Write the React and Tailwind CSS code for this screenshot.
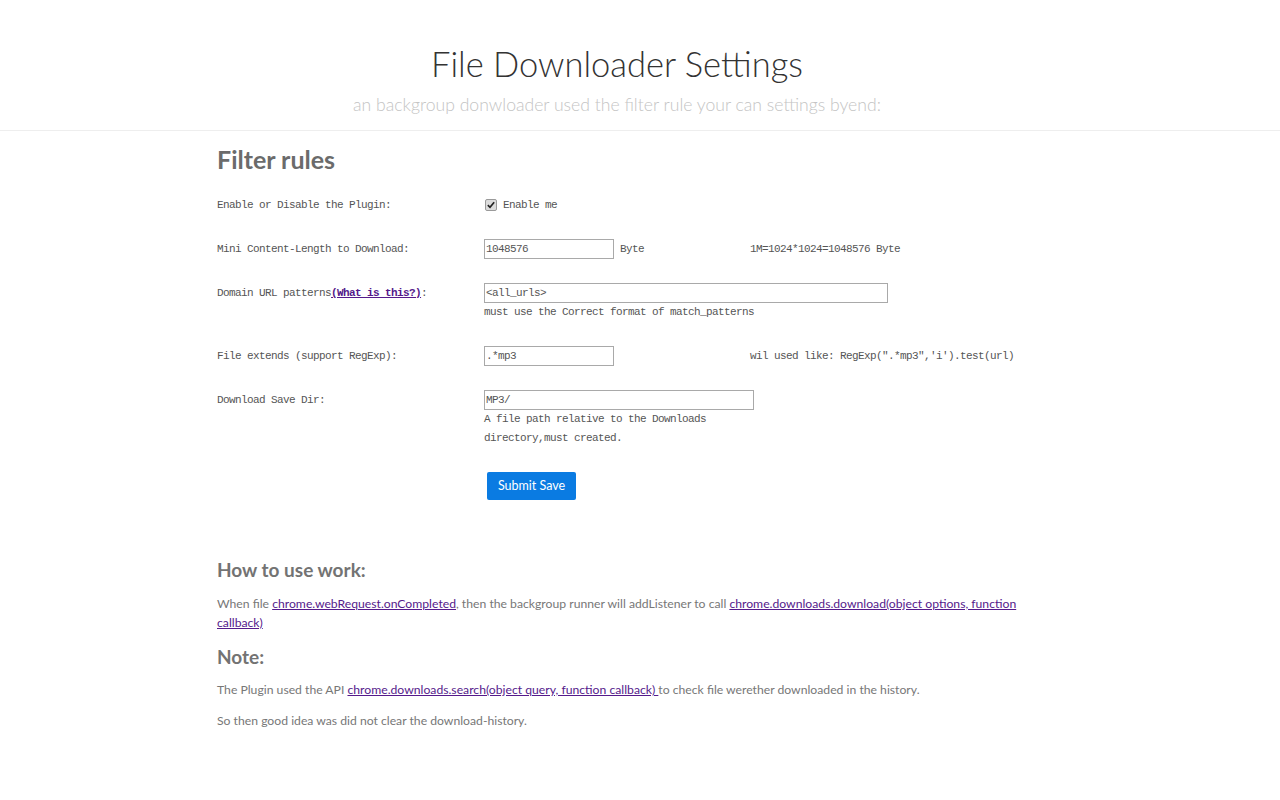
import React from "react";

const mono = "font-['SimSun','Liberation_Mono',monospace] text-[11px] tracking-[-0.6px] text-[#555]";
const sans = "font-['Segoe_UI','Lato',sans-serif]";

function Row({ label, children }) {
  return (
    <div className="flex">
      <div className={`w-[267px] shrink-0 leading-[20px] ${mono}`}>{label}</div>
      <div className="flex-1">{children}</div>
    </div>
  );
}

function TextInput({ value, width }) {
  return (
    <input
      type="text"
      defaultValue={value}
      className={`block h-[20px] border border-[#a9a9a9] px-[1px] leading-[18px] outline-none ${mono} text-[#333]`}
      style={{ width }}
    />
  );
}

export default function App() {
  return (
    <div className={`min-h-screen bg-white ${sans}`}>
      {/* Page header */}
      <header className="h-[131px] border-b border-[#eeeeee] pr-[46px] pt-[42px] text-center">
        <h1 className="text-[34.5px] font-light leading-[44px] text-[#333]">File Downloader Settings</h1>
        <p className="mt-[7px] text-[17.6px] font-light leading-[24px] text-[#c4c4c4]">
          an backgroup donwloader used the filter rule your can settings byend:
        </p>
      </header>

      <main className="mx-auto w-[876px] px-[15px]">
        <h2 className="mt-[13px] text-[25px] font-bold leading-[30px] text-[#6b6b6b]">Filter rules</h2>

        <div className="mt-[21px] space-y-6">
          <Row label="Enable or Disable the Plugin:">
            <div className={`flex h-[20px] items-center ${mono}`}>
              <span className="ml-[1px] flex h-[12px] w-[12px] items-center justify-center rounded-[2px] border border-[#9a9a9a] bg-[#dcdcdc]">
                <svg viewBox="0 0 12 12" className="h-[10px] w-[10px]">
                  <path d="M2.2 6.2 L4.8 8.8 L9.8 2.6" fill="none" stroke="#222" strokeWidth="2" />
                </svg>
              </span>
              <span className="ml-[6px]">Enable me</span>
            </div>
          </Row>

          <Row label="Mini Content-Length to Download:">
            <div className={`flex items-center ${mono}`}>
              <TextInput value="1048576" width={130} />
              <span className="ml-[6px] w-[130px]">Byte</span>
              <span>1M=1024*1024=1048576 Byte</span>
            </div>
          </Row>

          <Row
            label={
              <>
                Domain URL patterns
                <a href="#" className="font-bold text-[#551a8b] underline">(What is this?)</a>:
              </>
            }
          >
            <TextInput value="<all_urls>" width={404} />
            <div className={`leading-[19px] ${mono}`}>must use the Correct format of match_patterns</div>
          </Row>

          <Row label="File extends (support RegExp):">
            <div className={`flex items-center ${mono}`}>
              <TextInput value=".*mp3" width={130} />
              <span className="ml-[136px]">wil used like: RegExp(".*mp3",'i').test(url)</span>
            </div>
          </Row>

          <Row label="Download Save Dir:">
            <TextInput value="MP3/" width={270} />
            <div className={`w-[240px] leading-[19px] ${mono}`}>
              A file path relative to the Downloads directory,must created.
            </div>
          </Row>

          <Row label="">
            <button className="ml-[3px] block h-[28px] w-[89px] rounded-[2px] bg-[#0a7be2] text-[12.5px] text-white">
              Submit Save
            </button>
          </Row>
        </div>

        <h3 className="mt-[57px] text-[19px] font-bold leading-[26px] text-[#737373]">How to use work:</h3>
        <p className="mt-[12px] text-[12.2px] leading-[18.5px] text-[#777]">
          When file{" "}
          <a href="#" className="text-[#551a8b] underline">chrome.webRequest.onCompleted</a>, then the backgroup runner
          will addListener to call{" "}
          <a href="#" className="text-[#551a8b] underline">chrome.downloads.download(object options, function callback)</a>
        </p>
        <h3 className="mt-[12px] text-[19px] font-bold leading-[26px] text-[#737373]">Note:</h3>
        <p className="mt-[11px] text-[12.2px] leading-[18.5px] text-[#777]">
          The Plugin used the API{" "}
          <a href="#" className="text-[#551a8b] underline">chrome.downloads.search(object query, function callback) </a>
          to check file werether downloaded in the history.
        </p>
        <p className="mt-[12.5px] text-[12.2px] leading-[18.5px] text-[#777]">
          So then good idea was did not clear the download-history.
        </p>
      </main>
    </div>
  );
}
